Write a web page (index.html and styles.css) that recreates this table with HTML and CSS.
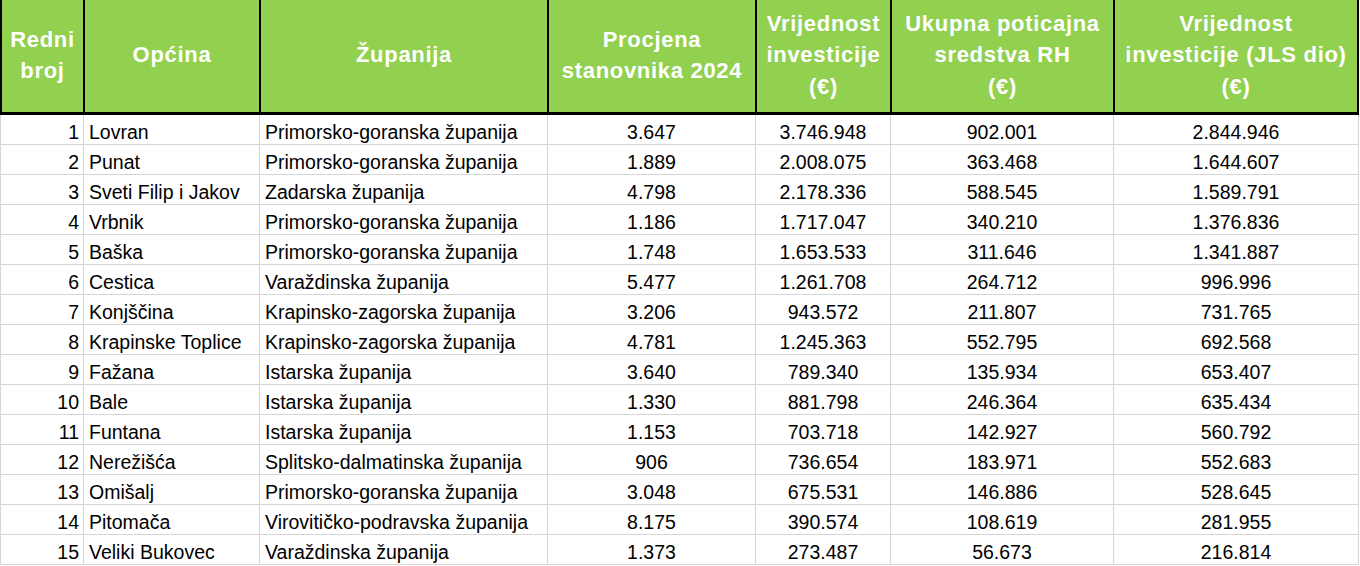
FILE: index.html
```html
<!DOCTYPE html>
<html lang="hr">
<head>
<meta charset="utf-8">
<title>Tablica</title>
<link rel="stylesheet" href="styles.css">
</head>
<body>
<div class="sheet">
  <div class="row head">
    <div class="cell">Redni<br>broj</div>
    <div class="cell">Općina</div>
    <div class="cell">Županija</div>
    <div class="cell">Procjena<br>stanovnika 2024</div>
    <div class="cell">Vrijednost<br>investicije<br>(€)</div>
    <div class="cell">Ukupna poticajna<br>sredstva RH<br>(€)</div>
    <div class="cell">Vrijednost<br>investicije (JLS dio)<br>(€)</div>
  </div>
  <div class="row data"><div class="cell num">1</div><div class="cell txt">Lovran</div><div class="cell txt">Primorsko-goranska županija</div><div class="cell ctr">3.647</div><div class="cell ctr">3.746.948</div><div class="cell ctr">902.001</div><div class="cell ctr">2.844.946</div></div>
  <div class="row data"><div class="cell num">2</div><div class="cell txt">Punat</div><div class="cell txt">Primorsko-goranska županija</div><div class="cell ctr">1.889</div><div class="cell ctr">2.008.075</div><div class="cell ctr">363.468</div><div class="cell ctr">1.644.607</div></div>
  <div class="row data"><div class="cell num">3</div><div class="cell txt">Sveti Filip i Jakov</div><div class="cell txt">Zadarska županija</div><div class="cell ctr">4.798</div><div class="cell ctr">2.178.336</div><div class="cell ctr">588.545</div><div class="cell ctr">1.589.791</div></div>
  <div class="row data"><div class="cell num">4</div><div class="cell txt">Vrbnik</div><div class="cell txt">Primorsko-goranska županija</div><div class="cell ctr">1.186</div><div class="cell ctr">1.717.047</div><div class="cell ctr">340.210</div><div class="cell ctr">1.376.836</div></div>
  <div class="row data"><div class="cell num">5</div><div class="cell txt">Baška</div><div class="cell txt">Primorsko-goranska županija</div><div class="cell ctr">1.748</div><div class="cell ctr">1.653.533</div><div class="cell ctr">311.646</div><div class="cell ctr">1.341.887</div></div>
  <div class="row data"><div class="cell num">6</div><div class="cell txt">Cestica</div><div class="cell txt">Varaždinska županija</div><div class="cell ctr">5.477</div><div class="cell ctr">1.261.708</div><div class="cell ctr">264.712</div><div class="cell ctr">996.996</div></div>
  <div class="row data"><div class="cell num">7</div><div class="cell txt">Konjščina</div><div class="cell txt">Krapinsko-zagorska županija</div><div class="cell ctr">3.206</div><div class="cell ctr">943.572</div><div class="cell ctr">211.807</div><div class="cell ctr">731.765</div></div>
  <div class="row data"><div class="cell num">8</div><div class="cell txt">Krapinske Toplice</div><div class="cell txt">Krapinsko-zagorska županija</div><div class="cell ctr">4.781</div><div class="cell ctr">1.245.363</div><div class="cell ctr">552.795</div><div class="cell ctr">692.568</div></div>
  <div class="row data"><div class="cell num">9</div><div class="cell txt">Fažana</div><div class="cell txt">Istarska županija</div><div class="cell ctr">3.640</div><div class="cell ctr">789.340</div><div class="cell ctr">135.934</div><div class="cell ctr">653.407</div></div>
  <div class="row data"><div class="cell num">10</div><div class="cell txt">Bale</div><div class="cell txt">Istarska županija</div><div class="cell ctr">1.330</div><div class="cell ctr">881.798</div><div class="cell ctr">246.364</div><div class="cell ctr">635.434</div></div>
  <div class="row data"><div class="cell num">11</div><div class="cell txt">Funtana</div><div class="cell txt">Istarska županija</div><div class="cell ctr">1.153</div><div class="cell ctr">703.718</div><div class="cell ctr">142.927</div><div class="cell ctr">560.792</div></div>
  <div class="row data"><div class="cell num">12</div><div class="cell txt">Nerežišća</div><div class="cell txt">Splitsko-dalmatinska županija</div><div class="cell ctr">906</div><div class="cell ctr">736.654</div><div class="cell ctr">183.971</div><div class="cell ctr">552.683</div></div>
  <div class="row data"><div class="cell num">13</div><div class="cell txt">Omišalj</div><div class="cell txt">Primorsko-goranska županija</div><div class="cell ctr">3.048</div><div class="cell ctr">675.531</div><div class="cell ctr">146.886</div><div class="cell ctr">528.645</div></div>
  <div class="row data"><div class="cell num">14</div><div class="cell txt">Pitomača</div><div class="cell txt">Virovitičko-podravska županija</div><div class="cell ctr">8.175</div><div class="cell ctr">390.574</div><div class="cell ctr">108.619</div><div class="cell ctr">281.955</div></div>
  <div class="row data"><div class="cell num">15</div><div class="cell txt">Veliki Bukovec</div><div class="cell txt">Varaždinska županija</div><div class="cell ctr">1.373</div><div class="cell ctr">273.487</div><div class="cell ctr">56.673</div><div class="cell ctr">216.814</div></div>
</div>
</body>
</html>
```

FILE: styles.css
```css
html, body {
  margin: 0;
  padding: 0;
  background: #ffffff;
}

.sheet {
  width: 1359px;
  font-family: "Liberation Sans", Arial, sans-serif;
  color: #000000;
}

.row {
  display: grid;
  grid-template-columns: 83px 176px 288px 208px 135px 223px 246px;
}

.cell {
  box-sizing: border-box;
  display: flex;
  white-space: nowrap;
}

.head .cell {
  height: 115px;
  background: #92d050;
  border-left: 2px solid #000000;
  border-bottom: 3px solid #000000;
  align-items: center;
  justify-content: center;
  text-align: center;
  color: #ffffff;
  font-weight: bold;
  font-size: 22px;
  line-height: 31.5px;
  letter-spacing: 0.7px;
  padding-bottom: 2px;
}

.head .cell:last-child {
  border-right: 2px solid #000000;
}

.data .cell {
  height: 30px;
  border-left: 1px solid #d6d6d6;
  border-bottom: 1px solid #d6d6d6;
  align-items: flex-end;
  font-size: 19.5px;
  line-height: 22px;
  padding-bottom: 1px;
}

.data .cell:last-child {
  border-right: 1px solid #d6d6d6;
}

.num {
  justify-content: flex-end;
  padding-right: 4px;
}

.txt {
  justify-content: flex-start;
  padding-left: 5px;
}

.ctr {
  justify-content: center;
}
```
